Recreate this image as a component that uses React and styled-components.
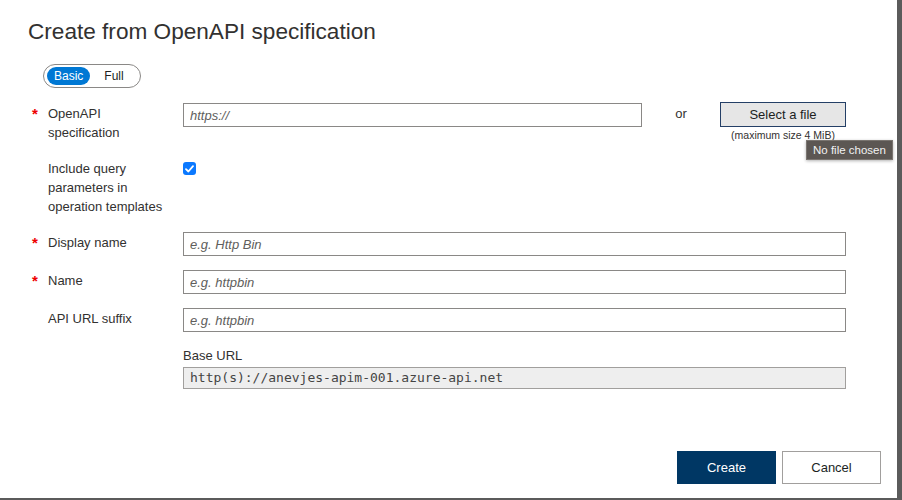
import styled, { createGlobalStyle } from "styled-components";

const GlobalStyle = createGlobalStyle`
  html, body {
    margin: 0;
    padding: 0;
    background: #5b5b5b;
  }
  body {
    font-family: "Liberation Sans", Arial, sans-serif;
    color: #323130;
  }
`;

const Panel = styled.div`
  position: relative;
  width: 897px;
  height: 498px;
  box-sizing: border-box;
  background: #fff;
  padding: 16px 16px 0 28px;
  display: flex;
  flex-direction: column;
`;

const Title = styled.h1`
  margin: 0;
  font-size: 22.6px;
  font-weight: 400;
  line-height: 32px;
  color: #323130;
`;

const Pill = styled.div`
  display: inline-flex;
  align-items: center;
  align-self: flex-start;
  margin: 16px 0 0 15px;
  height: 24px;
  width: 98px;
  box-sizing: border-box;
  padding: 0 3px;
  border: 1px solid #8a8886;
  border-radius: 12px;
`;

const PillOption = styled.span`
  display: inline-flex;
  align-items: center;
  justify-content: center;
  height: 18px;
  padding: 0 ${(p) => (p.$active ? "7px" : "14px")};
  border-radius: 9px;
  font-size: 12px;
  background: ${(p) => (p.$active ? "#0078d4" : "transparent")};
  color: ${(p) => (p.$active ? "#fff" : "#201f1e")};
`;

const Form = styled.div`
  margin-top: 15px;
  width: 818px;
  display: flex;
  flex-direction: column;
  gap: 14px;
`;

const Row = styled.div`
  display: grid;
  grid-template-columns: 20px 135px 1fr;
  min-height: ${(p) => p.$min || 0}px;
`;

const Star = styled.span`
  color: #e00;
  font-size: 15px;
  font-weight: 700;
  line-height: 22px;
  padding-left: 4px;
`;

const Label = styled.div`
  font-size: 13px;
  line-height: 19px;
  padding-top: 1px;
  color: #323130;
`;

const Control = styled.div`
  display: flex;
  align-items: flex-start;
`;

const TextInput = styled.input`
  flex: 1;
  min-width: 0;
  height: 24px;
  box-sizing: border-box;
  border: 1px solid #8a8886;
  padding: 0 6px;
  font-family: "Liberation Sans", Arial, sans-serif;
  font-size: 13px;
  background: #fff;
  outline: none;
  &::placeholder {
    color: #605e5c;
    font-style: italic;
  }
`;

const Or = styled.span`
  width: 78px;
  text-align: center;
  font-size: 13px;
  line-height: 22px;
`;

const FileBox = styled.div`
  position: relative;
  display: flex;
  flex-direction: column;
  align-items: center;
  width: 126px;
`;

const FileButton = styled.button`
  width: 126px;
  height: 25px;
  box-sizing: border-box;
  margin-top: -1px;
  border: 1px solid #243f66;
  background: #e6e6e6;
  font-family: "Liberation Sans", Arial, sans-serif;
  font-size: 13px;
  color: #201f1e;
  padding: 0;
`;

const Hint = styled.span`
  margin-top: 2px;
  font-size: 10.5px;
  line-height: 12px;
  color: #323130;
  white-space: nowrap;
`;

const Tooltip = styled.span`
  position: absolute;
  top: 37px;
  left: 86px;
  height: 20px;
  box-sizing: border-box;
  padding: 0 6px;
  display: flex;
  align-items: center;
  white-space: nowrap;
  background: #5c5753;
  border: 1px solid #7a7570;
  color: #f2f2f2;
  font-size: 11.5px;
  box-shadow: 0 1px 3px rgba(0, 0, 0, 0.3);
`;

const Check = styled.span`
  margin-top: 4px;
  width: 13px;
  height: 13px;
  border-radius: 3px;
  background: #0b79ff;
  display: inline-flex;
  align-items: center;
  justify-content: center;
`;

const BaseBlock = styled.div`
  margin-left: 155px;
  display: flex;
  flex-direction: column;
`;

const SmallLabel = styled.div`
  font-size: 13px;
  line-height: 19px;
  margin-bottom: 2px;
`;

const ReadOnly = styled.div`
  height: 22px;
  box-sizing: border-box;
  border: 1px solid #a19f9d;
  background: #eeeeee;
  padding: 0 6px;
  font-family: "DejaVu Sans Mono", monospace;
  font-size: 13px;
  line-height: 20px;
  color: #444;
`;

const Footer = styled.div`
  margin-top: auto;
  margin-bottom: 14px;
  display: flex;
  justify-content: flex-end;
  gap: 6px;
`;

const Button = styled.button`
  width: 99px;
  height: 33px;
  box-sizing: border-box;
  font-family: "Liberation Sans", Arial, sans-serif;
  font-size: 13px;
  border: 1px solid ${(p) => (p.$primary ? "#003764" : "#a19f9d")};
  background: ${(p) => (p.$primary ? "#003764" : "#fff")};
  color: ${(p) => (p.$primary ? "#fff" : "#201f1e")};
`;

function FieldRow({ required, label, min, children }) {
  return (
    <Row $min={min}>
      <Star>{required ? "*" : ""}</Star>
      <Label>{label}</Label>
      <Control>{children}</Control>
    </Row>
  );
}

export default function App() {
  return (
    <>
      <GlobalStyle />
      <Panel>
        <Title>Create from OpenAPI specification</Title>
        <Pill>
          <PillOption $active>Basic</PillOption>
          <PillOption>Full</PillOption>
        </Pill>
        <Form>
          <FieldRow
            required
            min={41}
            label={
              <>
                OpenAPI
                <br />
                specification
              </>
            }
          >
            <TextInput placeholder="https://" />
            <Or>or</Or>
            <FileBox>
              <FileButton>Select a file</FileButton>
              <Hint>(maximum size 4 MiB)</Hint>
              <Tooltip>No file chosen</Tooltip>
            </FileBox>
          </FieldRow>
          <FieldRow
            min={60}
            label={
              <>
                Include query
                <br />
                parameters in
                <br />
                operation templates
              </>
            }
          >
            <Check>
              <svg width="9" height="8" viewBox="0 0 9 8">
                <path
                  d="M1 4.2 L3.4 6.5 L8 1.2"
                  fill="none"
                  stroke="#fff"
                  strokeWidth="1.8"
                  strokeLinecap="round"
                  strokeLinejoin="round"
                />
              </svg>
            </Check>
          </FieldRow>
          <FieldRow required label="Display name">
            <TextInput placeholder="e.g. Http Bin" />
          </FieldRow>
          <FieldRow required label="Name">
            <TextInput placeholder="e.g. httpbin" />
          </FieldRow>
          <FieldRow label="API URL suffix">
            <TextInput placeholder="e.g. httpbin" />
          </FieldRow>
          <BaseBlock>
            <SmallLabel>Base URL</SmallLabel>
            <ReadOnly>http(s)://anevjes-apim-001.azure-api.net</ReadOnly>
          </BaseBlock>
        </Form>
        <Footer>
          <Button $primary>Create</Button>
          <Button>Cancel</Button>
        </Footer>
      </Panel>
    </>
  );
}
